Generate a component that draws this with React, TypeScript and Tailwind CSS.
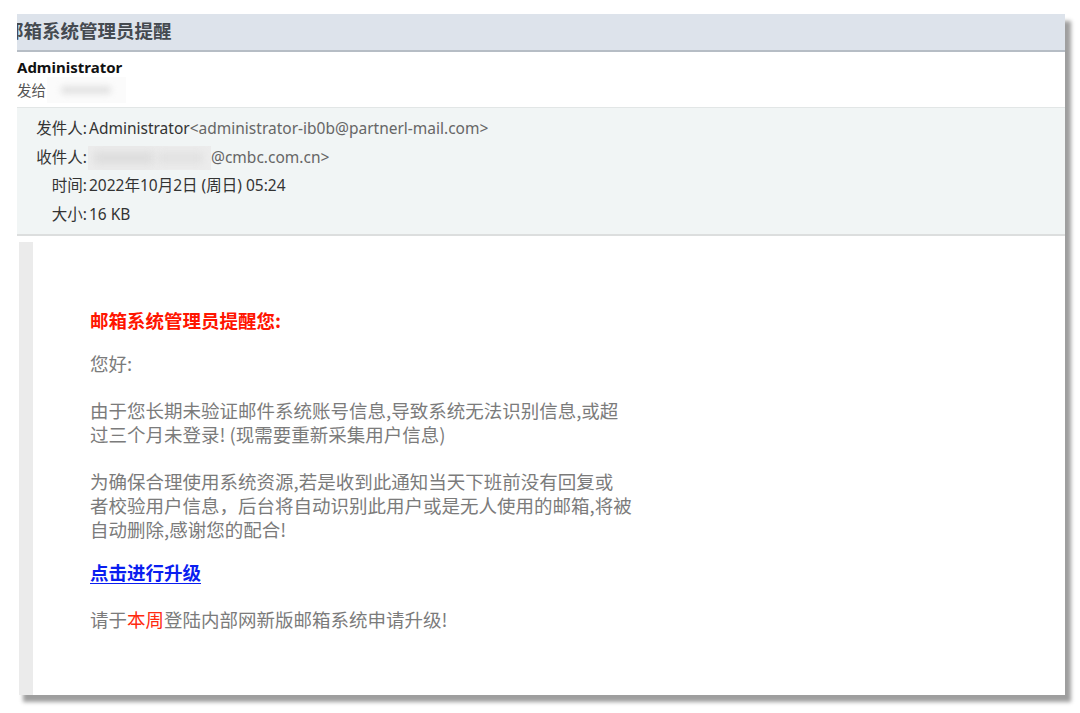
import React from "react";

const sans = "font-['Noto_Sans','Noto_Sans_CJK_SC',sans-serif]";

export default function App() {
  return (
    <div className={`w-[1080px] h-[713px] bg-white pt-[14px] pl-[17px] overflow-hidden ${sans}`}>
      <div className="w-[1048px] h-[681px] bg-white flex flex-col shadow-[6px_7px_4px_rgba(0,0,0,0.38)]">
        {/* title bar */}
        <div className="h-[38px] bg-[#dde3eb] border-b-2 border-[#b6bdc5] flex items-center overflow-hidden shrink-0 pb-[4px]">
          <span className="ml-[-12px] text-[18.5px] font-bold text-[#454a50] leading-none font-['Noto_Sans_CJK_SC',sans-serif]">
            邮箱系统管理员提醒
          </span>
        </div>
        {/* sender line */}
        <div className="h-[55px] flex flex-col justify-center shrink-0">
          <div className="text-[15px] font-bold text-[#111] leading-[20px]">Administrator</div>
          <div className="flex items-center text-[14.5px] text-[#555] leading-[22px]">
            <span>发给</span>
            <span className="relative inline-block w-[79px] h-[26px] ml-[1px] bg-[#fbfbfb]">
              <span className="absolute left-[14px] top-[9px] w-[50px] h-[8px] rounded-full bg-[#e2e2e2] blur-[3px]" />
            </span>
          </div>
        </div>
        {/* meta */}
        <div className="bg-[#f1f5f5] border-t border-[#e2e6e6] border-b-2 border-b-[#dcdede] h-[129px] pt-[6px] shrink-0 text-[15.5px] text-[#333]">
          <div className="flex items-center h-[29px]">
            <span className="w-[70px] text-right">发件人:</span>
            <span className="ml-[2px]">Administrator</span>
            <span className="text-[#666]">&lt;administrator-ib0b@partnerl-mail.com&gt;</span>
          </div>
          <div className="flex items-center h-[29px]">
            <span className="w-[70px] text-right">收件人:</span>
            <span className="relative inline-block w-[123px] h-[24px] ml-[1px] bg-[#ececec] overflow-hidden">
              <span className="absolute left-[6px] top-[6px] w-[60px] h-[12px] bg-[#dcdcdc] blur-[4px]" />
              <span className="absolute left-[70px] top-[7px] w-[45px] h-[10px] bg-[#e0e0e0] blur-[4px]" />
            </span>
            <span className="text-[#666]">@cmbc.com.cn&gt;</span>
          </div>
          <div className="flex items-center h-[28px]">
            <span className="w-[70px] text-right">时间:</span>
            <span className="ml-[2px]">2022年10月2日 (周日) 05:24</span>
          </div>
          <div className="flex items-center h-[29px]">
            <span className="w-[70px] text-right">大小:</span>
            <span className="ml-[2px]">16 KB</span>
          </div>
        </div>
        {/* body */}
        <div className="flex-1 flex pt-[6px] pl-[2px]">
          <div className="w-[14px] bg-[#ebebeb] shrink-0" />
          <div className="pl-[57px] pt-[66px] text-[18.5px] leading-[24px] text-[#7b7b7b] font-['Noto_Sans_CJK_SC',sans-serif]">
            <p className="font-bold text-[#ff1500]">邮箱系统管理员提醒您:</p>
            <p className="mt-[19px]">您好:</p>
            <p className="mt-[23px]">
              由于您长期未验证邮件系统账号信息,导致系统无法识别信息,或超
              <br />
              过三个月未登录! (现需要重新采集用户信息)
            </p>
            <p className="mt-[23px]">
              为确保合理使用系统资源,若是收到此通知当天下班前没有回复或
              <br />
              者校验用户信息，后台将自动识别此用户或是无人使用的邮箱,将被
              <br />
              自动删除,感谢您的配合!
            </p>
            <p className="mt-[19px]">
              <a className="font-bold text-[#0a1ef0] underline underline-offset-[3px]">点击进行升级</a>
            </p>
            <p className="mt-[23px]">
              请于<span className="text-[#ff2a10]">本周</span>登陆内部网新版邮箱系统申请升级!
            </p>
          </div>
        </div>
      </div>
    </div>
  );
}
